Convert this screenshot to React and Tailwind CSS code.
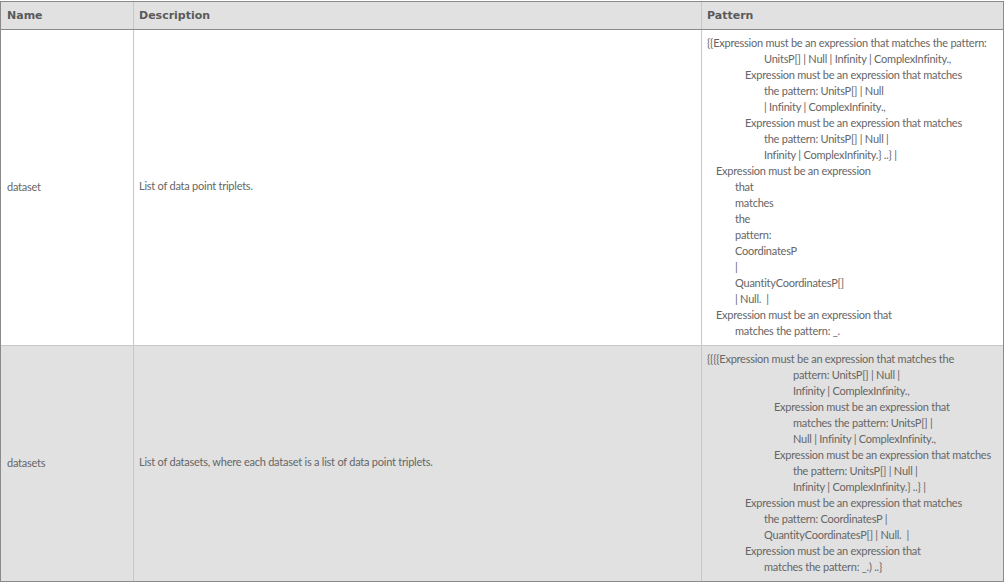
const row1 = [
  ["pl-0", "{{Expression must be an expression that matches the pattern:"],
  ["pl-[57px]", "UnitsP[] | Null | Infinity | ComplexInfinity.,"],
  ["pl-[38px]", "Expression must be an expression that matches"],
  ["pl-[57px]", "the pattern: UnitsP[] | Null"],
  ["pl-[57px]", "| Infinity | ComplexInfinity.,"],
  ["pl-[38px]", "Expression must be an expression that matches"],
  ["pl-[57px]", "the pattern: UnitsP[] | Null |"],
  ["pl-[57px]", "Infinity | ComplexInfinity.} ..} |"],
  ["pl-[9px]", "Expression must be an expression"],
  ["pl-[28px]", "that"],
  ["pl-[28px]", "matches"],
  ["pl-[28px]", "the"],
  ["pl-[28px]", "pattern:"],
  ["pl-[28px]", "CoordinatesP"],
  ["pl-[28px]", "|"],
  ["pl-[28px]", "QuantityCoordinatesP[]"],
  ["pl-[28px]", "| Null.  |"],
  ["pl-[9px]", "Expression must be an expression that"],
  ["pl-[28px]", "matches the pattern: _."],
];

const row2 = [
  ["pl-0", "{{{{Expression must be an expression that matches the"],
  ["pl-[86px]", "pattern: UnitsP[] | Null |"],
  ["pl-[86px]", "Infinity | ComplexInfinity.,"],
  ["pl-[67px]", "Expression must be an expression that"],
  ["pl-[86px]", "matches the pattern: UnitsP[] |"],
  ["pl-[86px]", "Null | Infinity | ComplexInfinity.,"],
  ["pl-[67px]", "Expression must be an expression that matches"],
  ["pl-[86px]", "the pattern: UnitsP[] | Null |"],
  ["pl-[86px]", "Infinity | ComplexInfinity.} ..} |"],
  ["pl-[38px]", "Expression must be an expression that matches"],
  ["pl-[57px]", "the pattern: CoordinatesP |"],
  ["pl-[57px]", "QuantityCoordinatesP[] | Null.  |"],
  ["pl-[38px]", "Expression must be an expression that"],
  ["pl-[57px]", "matches the pattern: _.) ..}"],
];

function Row({ name, description, lines, className }) {
  return (
    <div className={`grid grid-cols-[133px_568px_1fr] ${className}`}>
      <div className="flex items-center border-r border-[#c8c8c8] px-[6px] pb-[2px]">{name}</div>
      <div className="flex items-center border-r border-[#c8c8c8] px-[5px] pb-[3px]">{description}</div>
      <div className="px-[5px] py-[5px]">
        {lines.map(([indent, text], i) => (
          <div key={i} className={`h-4 whitespace-pre ${indent}`}>{text}</div>
        ))}
      </div>
    </div>
  );
}

export default function App() {
  return (
    <div className="w-[1004px] h-[584px] pt-px bg-white overflow-hidden">
      <div className="border border-[#8a8a8a] text-[11px] tracking-[-0.24px] leading-4 text-[#666] font-['Lato',sans-serif]">
        {/* Header */}
        <div className="grid grid-cols-[133px_568px_1fr] h-[28px] bg-[#e1e1e1] border-b border-[#8a8a8a] font-['DejaVu_Sans',sans-serif] font-bold text-[11px] tracking-[0px] text-[#5a5a5a]">
          <div className="flex items-center border-r border-[#c8c8c8] px-[6px]">Name</div>
          <div className="flex items-center border-r border-[#c8c8c8] px-[5px]">Description</div>
          <div className="flex items-center px-[5px]">Pattern</div>
        </div>
        <Row name="dataset" description="List of data point triplets." lines={row1} className="h-[316px] bg-white border-b border-[#c8c8c8]" />
        <Row name="datasets" description="List of datasets, where each dataset is a list of data point triplets." lines={row2} className="h-[235px] bg-[#e1e1e1]" />
      </div>
    </div>
  );
}
